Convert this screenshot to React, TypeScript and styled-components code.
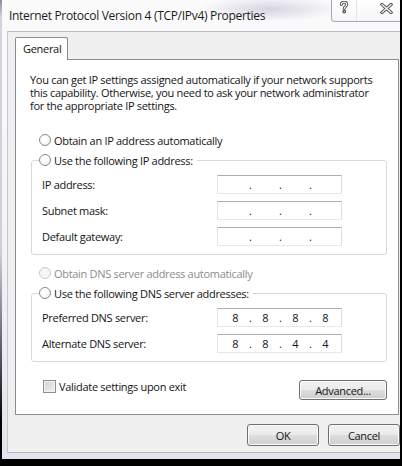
import React from "react";
import styled, { createGlobalStyle } from "styled-components";

const Global = createGlobalStyle`
  html, body { margin: 0; padding: 0; background: #000; }
  body {
    font-family: "Open Sans", "Noto Sans", sans-serif;
    font-size: 11px;
    letter-spacing: -0.3px;
    color: #141414;
  }
  * { box-sizing: border-box; }
`;

const Screen = styled.div`
  width: 402px;
  height: 466px;
  background: #000;
  padding: 0 2px 6px 0;
  display: flex;
`;

const Window = styled.div`
  width: 400px;
  height: 460px;
  overflow: hidden;
  display: flex;
  flex-direction: column;
  background:
    radial-gradient(ellipse 70px 13px at 268px 9px, rgba(186, 180, 204, 0.55), rgba(186, 180, 204, 0) 100%),
    linear-gradient(#fbfbfc, #f3f2f7 55%, #e6e2ee);
  border-left: 2px solid;
  border-bottom: 1px solid #8d8a9c;
  border-image: linear-gradient(#8a8894 0%, #d6d4de 4%, #cfcdd8 55%, #4a4852 80%, #000 92%) 1;
  padding-bottom: 6px;
`;

const TitleBar = styled.div`
  height: 31px;
  flex: none;
  display: flex;
  align-items: flex-start;
`;

const Title = styled.div`
  flex: 1;
  padding: 8px 0 0 7px;
  font-size: 12px;
  line-height: 15px;
  letter-spacing: -0.3px;
  color: #1b1b1b;
  white-space: nowrap;
`;

const CaptionGroup = styled.div`
  display: flex;
  height: 22px;
  margin-right: -16px;
  background: linear-gradient(#ffffff, #f6f6f8);
  border-left: 1px solid #a9a7b3;
  border-bottom: 1px solid #a9a7b3;
  border-bottom-left-radius: 4px;
`;

const CaptionButton = styled.div<{ $w: number; $sep?: boolean }>`
  width: ${(p) => p.$w}px;
  display: flex;
  justify-content: center;
  align-items: flex-start;
  padding-top: 1px;
  border-left: ${(p) => (p.$sep ? "1px solid #e4e3ea" : "none")};
`;

const Client = styled.div`
  flex: 1;
  margin-left: 5px;
  margin-right: -10px;
  background: #f0f0f0;
  border-top: 1px solid #b9b9c2;
  border-left: 1px solid #c6c6ce;
  border-bottom: 1px solid #b3b3bc;
  padding: 5px 0 0 7px;
  display: flex;
  flex-direction: column;
`;

const TabStrip = styled.div`
  display: flex;
  height: 23px;
`;

const Tab = styled.div`
  position: relative;
  z-index: 1;
  width: 53px;
  height: 23px;
  padding: 0 0 1px 7px;
  display: flex;
  align-items: center;
  background: #fff;
  border: 1px solid #898c95;
  border-bottom: none;
  border-radius: 2px 2px 0 0;
`;

const Panel = styled.div`
  width: 384px;
  margin-top: -1px;
  background: #fff;
  border: 1px solid #898c95;
  padding: 13px 11px 14px 15px;
  display: flex;
  flex-direction: column;
`;

const Intro = styled.p`
  margin: 0 0 0 -1px;
  line-height: 13px;
  white-space: nowrap;
`;

const RadioRow = styled.div<{ $top: number; $disabled?: boolean }>`
  height: 20px;
  margin-top: ${(p) => p.$top}px;
  padding-left: 8px;
  display: flex;
  align-items: center;
  gap: 3px;
  color: ${(p) => (p.$disabled ? "#8c8c8c" : "inherit")};
`;

const Radio = styled.span<{ $disabled?: boolean }>`
  width: 12px;
  height: 12px;
  flex: none;
  border-radius: 50%;
  border: 1px solid ${(p) => (p.$disabled ? "#c9c9c9" : "#8a8a8a")};
  background: ${(p) =>
    p.$disabled
      ? "#f6f6f6"
      : "radial-gradient(circle at 40% 35%, #ffffff 30%, #e8e8e8 100%)"};
`;

const Group = styled.fieldset<{ $top: number }>`
  margin: ${(p) => p.$top}px 0 0 0;
  padding: 5px 44px 8px 7px;
  min-width: 0;
  border: 1px solid #d6d9dd;
  border-radius: 3px;
  display: flex;
  flex-direction: column;
  gap: 7px;
`;

const Legend = styled.legend`
  margin: 0;
  padding: 0 4px 0 0;
  height: 20px;
  display: flex;
  align-items: center;
  gap: 3px;
`;

const FieldRow = styled.div`
  height: 19px;
  padding-left: 3px;
  display: flex;
  align-items: center;
  justify-content: space-between;
`;

const IPBox = styled.div`
  width: 125px;
  height: 19px;
  display: flex;
  align-items: center;
  padding-left: 5px;
  background: #fff;
  border: 1px solid;
  border-color: #abadb3 #dbdfe6 #e3e9ef #e2e3ea;
  letter-spacing: 0;
`;

const Octet = styled.span`
  width: 25px;
  text-align: center;
`;

const Dot = styled.span`
  width: 5px;
  text-align: center;
`;

const BottomRow = styled.div`
  margin-top: 18px;
  padding-left: 12px;
  display: flex;
  justify-content: space-between;
  align-items: flex-start;
`;

const CheckLabel = styled.label`
  height: 13px;
  display: flex;
  align-items: center;
  gap: 3px;
`;

const CheckBox = styled.span`
  width: 13px;
  height: 13px;
  flex: none;
  border: 1px solid #8e8f8f;
  background: linear-gradient(135deg, #cfcfcf, #f4f4f4);
  box-shadow: inset 0 0 0 1px #f3f3f3;
`;

const Button = styled.div<{ $w: number; $h: number }>`
  width: ${(p) => p.$w}px;
  height: ${(p) => p.$h}px;
  display: flex;
  align-items: center;
  justify-content: center;
  border: 1px solid #707070;
  border-radius: 3px;
  background: linear-gradient(#f2f2f2 0%, #ebebeb 50%, #dddddd 51%, #cfcfcf 100%);
  box-shadow: inset 0 0 0 1px #fbfbfb;
  color: #151515;
`;

const Footer = styled.div`
  margin-top: 9px;
  padding-right: 10px;
  display: flex;
  justify-content: flex-end;
  gap: 9px;
`;

const HelpGlyph = () => (
  <svg width="10" height="13" viewBox="0 0 10 13">
    <g fill="none" strokeLinecap="round" strokeLinejoin="round">
      <path d="M2.3 3.6C2.3 1.9 3.6 1.2 5 1.2C6.6 1.2 7.8 2.1 7.8 3.6C7.8 5.3 5.2 5.6 5.2 7.6" stroke="#555" strokeWidth="3" />
      <circle cx="5.2" cy="10.6" r="1.3" fill="#555" stroke="#555" strokeWidth="1.2" />
      <path d="M2.3 3.6C2.3 1.9 3.6 1.2 5 1.2C6.6 1.2 7.8 2.1 7.8 3.6C7.8 5.3 5.2 5.6 5.2 7.6" stroke="#fff" strokeWidth="1.1" />
      <circle cx="5.2" cy="10.6" r="0.6" fill="#fff" />
    </g>
  </svg>
);

const CloseGlyph = () => (
  <svg width="13" height="11" viewBox="0 0 13 11" style={{ marginTop: 2 }}>
    <g fill="none" strokeLinecap="square">
      <path d="M2 1.5L11 9.5M11 1.5L2 9.5" stroke="#555" strokeWidth="3.2" />
      <path d="M2 1.5L11 9.5M11 1.5L2 9.5" stroke="#fff" strokeWidth="1.2" />
    </g>
  </svg>
);

const IPField = ({ value }: { value?: string[] }) => {
  const parts = value ?? ["", "", "", ""];
  return (
    <IPBox>
      {parts.map((p, i) => (
        <React.Fragment key={i}>
          {i > 0 && <Dot>.</Dot>}
          <Octet>{p}</Octet>
        </React.Fragment>
      ))}
    </IPBox>
  );
};

export default function App() {
  return (
    <>
      <Global />
      <Screen>
        <Window>
          <TitleBar>
            <Title>Internet Protocol Version 4 (TCP/IPv4) Properties</Title>
            <CaptionGroup>
              <CaptionButton $w={24}>
                <HelpGlyph />
              </CaptionButton>
              <CaptionButton $w={60} $sep>
                <CloseGlyph />
              </CaptionButton>
            </CaptionGroup>
          </TitleBar>
          <Client>
            <TabStrip>
              <Tab>General</Tab>
            </TabStrip>
            <Panel>
              <Intro>
                You can get IP settings assigned automatically if your network supports
                <br />
                this capability. Otherwise, you need to ask your network administrator
                <br />
                for the appropriate IP settings.
              </Intro>
              <RadioRow $top={18}>
                <Radio />
                Obtain an IP address automatically
              </RadioRow>
              <Group $top={0}>
                <Legend>
                  <Radio />
                  Use the following IP address:
                </Legend>
                <FieldRow>
                  IP address:
                  <IPField />
                </FieldRow>
                <FieldRow>
                  Subnet mask:
                  <IPField />
                </FieldRow>
                <FieldRow>
                  Default gateway:
                  <IPField />
                </FieldRow>
              </Group>
              <RadioRow $top={8} $disabled>
                <Radio $disabled />
                Obtain DNS server address automatically
              </RadioRow>
              <Group $top={0}>
                <Legend>
                  <Radio />
                  Use the following DNS server addresses:
                </Legend>
                <FieldRow>
                  Preferred DNS server:
                  <IPField value={["8", "8", "8", "8"]} />
                </FieldRow>
                <FieldRow>
                  Alternate DNS server:
                  <IPField value={["8", "8", "4", "4"]} />
                </FieldRow>
              </Group>
              <BottomRow>
                <CheckLabel>
                  <CheckBox />
                  Validate settings upon exit
                </CheckLabel>
                <Button $w={88} $h={20}>Advanced...</Button>
              </BottomRow>
            </Panel>
            <Footer>
              <Button $w={72} $h={22}>OK</Button>
              <Button $w={72} $h={22}>Cancel</Button>
            </Footer>
          </Client>
        </Window>
      </Screen>
    </>
  );
}
